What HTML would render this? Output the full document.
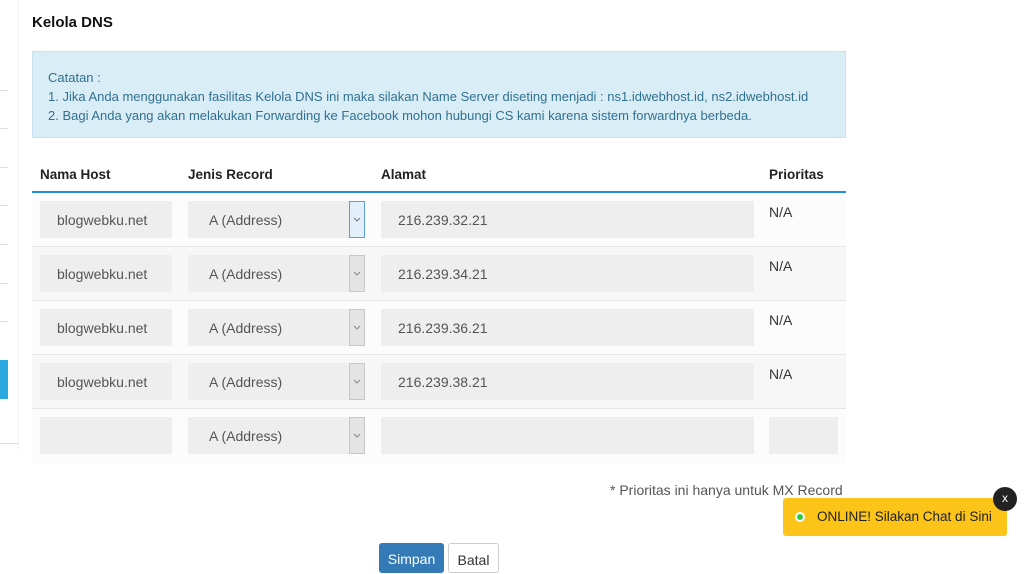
<!DOCTYPE html>
<html><head><meta charset="utf-8"><style>
*{box-sizing:border-box;margin:0;padding:0}
body{width:1024px;height:563px;overflow:hidden;background:#fff;font-family:"Liberation Sans",sans-serif;color:#333;position:relative}
.abs{position:absolute}
.sl{position:absolute;left:0;width:8px;height:1px;background:#ddd}
.row{position:absolute;left:32px;width:814px;height:54px;border-bottom:1px solid #e6e6e6}
.inp{position:absolute;background:#eee;height:37px;font-size:14px;color:#555;line-height:38px}
.arr{position:absolute;left:349px;top:8px;width:16px;height:37px;background:#e4e4e4;border:1px solid #c8c8c8}
.arr svg{position:absolute;left:3px;top:15px}
.na{position:absolute;left:737px;top:11px;font-size:14px;color:#333}
</style></head><body>
<div class="abs" style="left:18px;top:0;width:1px;height:450px;background:#f0f0f0"></div>
<div class="sl" style="top:90px"></div><div class="sl" style="top:128px"></div><div class="sl" style="top:167px"></div><div class="sl" style="top:205px"></div><div class="sl" style="top:244px"></div><div class="sl" style="top:283px"></div><div class="sl" style="top:321px"></div>
<div class="abs" style="left:0;top:360px;width:8px;height:39px;background:#29a8e0"></div>
<div class="sl" style="top:443px;width:18px"></div>
<div class="abs" style="left:32px;top:14px;font-size:15px;font-weight:bold;color:#111">Kelola DNS</div>
<div class="abs" style="left:32px;top:51px;width:814px;height:87px;background:#d9edf7;border:1px solid #c5e3f0;color:#31708f;font-size:13px;line-height:19px;padding:16px 0 0 15px">Catatan :<br>1. Jika Anda menggunakan fasilitas Kelola DNS ini maka silakan Name Server diseting menjadi : ns1.idwebhost.id, ns2.idwebhost.id<br>2. Bagi Anda yang akan melakukan Forwarding ke Facebook mohon hubungi CS kami karena sistem forwardnya berbeda.</div>
<div class="abs" style="top:167px;left:40px;font-size:13.5px;font-weight:bold;color:#222">Nama Host</div>
<div class="abs" style="top:167px;left:188px;font-size:13.5px;font-weight:bold;color:#222">Jenis Record</div>
<div class="abs" style="top:167px;left:381px;font-size:13.5px;font-weight:bold;color:#222">Alamat</div>
<div class="abs" style="top:167px;left:769px;font-size:13.5px;font-weight:bold;color:#222">Prioritas</div>
<div class="abs" style="top:191px;left:32px;width:814px;height:2px;background:#1f8fd6"></div>

<div class="row" style="top:193px;background:#fcfcfc"><div class="inp" style="left:8px;top:8px;width:132px;padding-left:17px">blogwebku.net</div><div class="inp" style="left:156px;top:8px;width:177px;padding-left:21px">A (Address)</div><div class="arr" style="left:317px;background:#e3f0fb;border-color:#5a9fd6"><svg width="8" height="5"><path d="M1 1L4 4L7 1" stroke="#777" fill="none"/></svg></div><div class="inp" style="left:349px;top:8px;width:373px;padding-left:17px">216.239.32.21</div><div class="na">N/A</div></div>
<div class="row" style="top:247px;background:#f7f7f7"><div class="inp" style="left:8px;top:8px;width:132px;padding-left:17px">blogwebku.net</div><div class="inp" style="left:156px;top:8px;width:177px;padding-left:21px">A (Address)</div><div class="arr" style="left:317px"><svg width="8" height="5"><path d="M1 1L4 4L7 1" stroke="#888" fill="none"/></svg></div><div class="inp" style="left:349px;top:8px;width:373px;padding-left:17px">216.239.34.21</div><div class="na">N/A</div></div>
<div class="row" style="top:301px;background:#fcfcfc"><div class="inp" style="left:8px;top:8px;width:132px;padding-left:17px">blogwebku.net</div><div class="inp" style="left:156px;top:8px;width:177px;padding-left:21px">A (Address)</div><div class="arr" style="left:317px"><svg width="8" height="5"><path d="M1 1L4 4L7 1" stroke="#888" fill="none"/></svg></div><div class="inp" style="left:349px;top:8px;width:373px;padding-left:17px">216.239.36.21</div><div class="na">N/A</div></div>
<div class="row" style="top:355px;background:#f7f7f7"><div class="inp" style="left:8px;top:8px;width:132px;padding-left:17px">blogwebku.net</div><div class="inp" style="left:156px;top:8px;width:177px;padding-left:21px">A (Address)</div><div class="arr" style="left:317px"><svg width="8" height="5"><path d="M1 1L4 4L7 1" stroke="#888" fill="none"/></svg></div><div class="inp" style="left:349px;top:8px;width:373px;padding-left:17px">216.239.38.21</div><div class="na">N/A</div></div>
<div class="row" style="top:409px;background:#fcfcfc;border:none"><div class="inp" style="left:8px;top:8px;width:132px"></div><div class="inp" style="left:156px;top:8px;width:177px;padding-left:21px">A (Address)</div><div class="arr" style="left:317px"><svg width="8" height="5"><path d="M1 1L4 4L7 1" stroke="#888" fill="none"/></svg></div><div class="inp" style="left:349px;top:8px;width:373px"></div><div class="inp" style="left:737px;top:8px;width:69px"></div></div>

<div class="abs" style="left:610px;top:482px;font-size:14px;color:#555">* Prioritas ini hanya untuk MX Record</div>
<div class="abs" style="left:379px;top:543px;width:65px;height:30px;background:#337ab7;border-radius:3px;color:#fff;font-size:14px;text-align:center;line-height:28px;padding-top:2px">Simpan</div>
<div class="abs" style="left:448px;top:543px;width:51px;height:30px;background:#fff;border:1px solid #ccc;border-radius:3px;color:#333;font-size:14px;text-align:center;line-height:28px;padding-top:2px">Batal</div>
<div class="abs" style="left:783px;top:498px;width:224px;height:38px;background:#fcc419;border-radius:3px;font-size:13.5px;color:#222;line-height:38px;padding-left:34px">ONLINE! Silakan Chat di Sini</div>
<div class="abs" style="left:795px;top:512px;width:10px;height:10px;border-radius:50%;background:#2ecc40;border:2px solid #fff"></div>
<div class="abs" style="left:993px;top:487px;width:24px;height:24px;border-radius:50%;background:#222;color:#fff;font-size:12px;text-align:center;line-height:23px">x</div>
</body></html>
